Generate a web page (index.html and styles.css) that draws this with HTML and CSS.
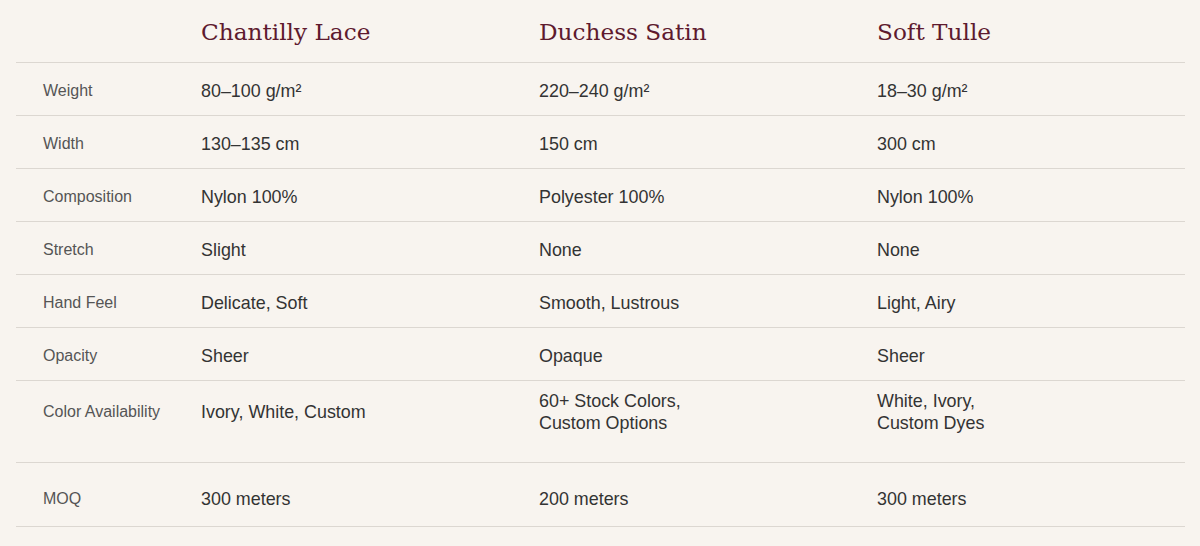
FILE: index.html
```html
<!DOCTYPE html>
<html lang="en">
<head>
<meta charset="utf-8">
<title>Fabric Comparison</title>
<link rel="stylesheet" href="styles.css">
</head>
<body>
<div class="spec-table">
  <div class="row head">
    <div class="cell label"></div>
    <div class="cell name">Chantilly Lace</div>
    <div class="cell name">Duchess Satin</div>
    <div class="cell name">Soft Tulle</div>
  </div>
  <div class="row">
    <div class="cell label">Weight</div>
    <div class="cell val">80–100 g/m²</div>
    <div class="cell val">220–240 g/m²</div>
    <div class="cell val">18–30 g/m²</div>
  </div>
  <div class="row">
    <div class="cell label">Width</div>
    <div class="cell val">130–135 cm</div>
    <div class="cell val">150 cm</div>
    <div class="cell val">300 cm</div>
  </div>
  <div class="row">
    <div class="cell label">Composition</div>
    <div class="cell val">Nylon 100%</div>
    <div class="cell val">Polyester 100%</div>
    <div class="cell val">Nylon 100%</div>
  </div>
  <div class="row">
    <div class="cell label">Stretch</div>
    <div class="cell val">Slight</div>
    <div class="cell val">None</div>
    <div class="cell val">None</div>
  </div>
  <div class="row">
    <div class="cell label">Hand Feel</div>
    <div class="cell val">Delicate, Soft</div>
    <div class="cell val">Smooth, Lustrous</div>
    <div class="cell val">Light, Airy</div>
  </div>
  <div class="row">
    <div class="cell label">Opacity</div>
    <div class="cell val">Sheer</div>
    <div class="cell val">Opaque</div>
    <div class="cell val">Sheer</div>
  </div>
  <div class="row tall">
    <div class="cell label">Color Availability</div>
    <div class="cell val">Ivory, White, Custom</div>
    <div class="cell val">60+ Stock Colors,<br>Custom Options</div>
    <div class="cell val">White, Ivory,<br>Custom Dyes</div>
  </div>
  <div class="row last">
    <div class="cell label">MOQ</div>
    <div class="cell val">300 meters</div>
    <div class="cell val">200 meters</div>
    <div class="cell val">300 meters</div>
  </div>
</div>
</body>
</html>
```

FILE: styles.css
```css
html, body {
  margin: 0;
  padding: 0;
  background: #f8f4ef;
}

body {
  font-family: "Liberation Sans", Arial, sans-serif;
  color: #333;
}

.spec-table {
  width: 1169px;
  margin-left: 16px;
}

.row {
  display: grid;
  grid-template-columns: 156px 338px 338px 337px;
  border-bottom: 1px solid #dcd7d1;
}

.cell {
  display: flex;
  align-items: center;
  padding: 18px 0 14px 29px;
  font-size: 17.9px;
  line-height: 20px;
}

.cell.label {
  padding-left: 27px;
  font-size: 16px;
  color: #555;
}

.head .cell {
  padding-top: 17px;
  padding-bottom: 15px;
  line-height: 30px;
}

.cell.name {
  font-family: "DejaVu Serif", Georgia, serif;
  font-size: 23.2px;
  color: #5e1a2e;
}

.tall .cell {
  padding-top: 9px;
  padding-bottom: 28px;
  line-height: 22px;
  min-height: 44px;
}

.last .cell {
  padding-top: 26px;
  padding-bottom: 17px;
}
```
